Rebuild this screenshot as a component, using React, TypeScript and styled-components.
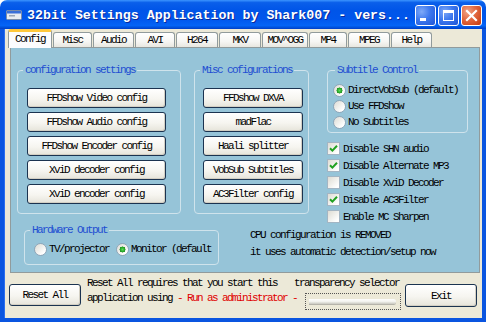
import React from 'react';
import styled, { createGlobalStyle, css } from 'styled-components';

const Global = createGlobalStyle`
  html, body { margin: 0; padding: 0; background: #fff; overflow: hidden; }
  #root { width: 486px; height: 322px; }
`;

const mono = `"Liberation Mono", "DejaVu Sans Mono", monospace`;
const fs = '11px';
const ls = '-1.6px';

const Window = styled.div`
  width: 486px;
  height: 322px;
  display: flex;
  flex-direction: column;
  font-family: ${mono};
  font-size: ${fs};
  letter-spacing: ${ls};
  color: #000;
`;

const TitleBar = styled.div`
  height: 29px;
  flex: none;
  display: flex;
  align-items: center;
  padding: 1px 4px 0 6px;
  box-sizing: border-box;
  border-radius: 7px 7px 0 0;
  background: linear-gradient(to bottom, #3C95FF 0%, #0A5FEA 9%, #0055E8 35%, #0056EC 65%, #0464F6 88%, #0050DA 95%, #003DC8 100%);
`;

const TitleIcon = styled.svg`
  flex: none;
  margin-right: 5px;
`;

const TitleText = styled.div`
  flex: 1;
  color: #fff;
  font-family: ${mono};
  font-weight: bold;
  font-size: 13.3px;
  letter-spacing: 0;
  white-space: nowrap;
  text-shadow: 1px 1px 0 #0A2A9A;
`;

const CaptionButtons = styled.div`
  display: flex;
  gap: 2px;
  margin-top: 1px;
`;

const CaptionButton = styled.div<{ $close?: boolean }>`
  width: 21px;
  height: 21px;
  box-sizing: border-box;
  border: 1px solid #fff;
  border-radius: 3px;
  display: flex;
  align-items: center;
  justify-content: center;
  background: ${(p) =>
    p.$close
      ? 'radial-gradient(circle at 30% 30%, #F0A487 0%, #E2683F 45%, #C4380C 100%)'
      : 'radial-gradient(circle at 30% 30%, #7FAAF8 0%, #3D78EE 45%, #1E55D6 100%)'};
`;

const Frame = styled.div`
  flex: 1;
  display: flex;
  flex-direction: column;
  border: 4px solid #0A55E0;
  border-top: 0;
  background: #ECE9D8;
  box-shadow: inset 1px 0 0 #2A6EF0;
`;

const TabStrip = styled.div`
  height: 18px;
  flex: none;
  display: flex;
  align-items: flex-end;
  padding-left: 6px;
  position: relative;
  z-index: 1;
`;

const Tab = styled.div<{ $w: number; $active?: boolean }>`
  box-sizing: border-box;
  width: ${(p) => p.$w}px;
  height: 15px;
  margin-right: 1px;
  border: 1px solid #919B9C;
  border-bottom: 0;
  border-radius: 3px 3px 0 0;
  background: linear-gradient(to bottom, #FFFFFF 0%, #F6F6F3 60%, #E8E7E0 100%);
  display: flex;
  align-items: center;
  justify-content: center;
  white-space: pre;
  ${(p) =>
    p.$active &&
    css`
      height: 19px;
      margin-left: -2px;
      margin-bottom: -1px;
      border-top: 3px solid #FFC83C;
      background: #FCFCFE;
      padding-bottom: 3px;
    `}
`;

const Panel = styled.div`
  height: 226px;
  flex: none;
  box-sizing: border-box;
  margin: 0 2px 0 6px;
  border: 1px solid #919B9C;
  background: #96C4D8;
  padding: 16px 0 0 6px;
  display: flex;
  flex-direction: column;
`;

const Row = styled.div<{ $mt?: number }>`
  display: flex;
  align-items: flex-start;
  margin-top: ${(p) => p.$mt ?? 0}px;
`;

const Group = styled.fieldset<{ $w: number; $ml?: number }>`
  box-sizing: border-box;
  width: ${(p) => p.$w}px;
  min-width: 0;
  margin: 0 0 0 ${(p) => p.$ml ?? 0}px;
  padding: 0;
  border: 1px solid #CFE3EC;
  border-radius: 4px;
`;

const Legend = styled.legend<{ $ml: number }>`
  padding: 0 2px;
  margin-left: ${(p) => p.$ml}px;
  line-height: 12px;
  color: #1E4ED2;
`;

const ButtonList = styled.div<{ $pad: string }>`
  display: flex;
  flex-direction: column;
  gap: 4px;
  padding: ${(p) => p.$pad};
`;

const XPButton = styled.button<{ $w?: number; $h?: number; $mt?: number }>`
  box-sizing: border-box;
  width: ${(p) => (p.$w ? `${p.$w}px` : '100%')};
  height: ${(p) => p.$h ?? 20}px;
  padding: 0;
  margin: ${(p) => p.$mt ?? 0}px 0 0 0;
  font-family: ${mono};
  font-size: ${fs};
  letter-spacing: ${ls};
  color: #000;
  border: 1px solid #1B3350;
  border-radius: 3px;
  background: linear-gradient(to bottom, #FFFFFF 0%, #F6F5F0 55%, #E6E4DA 100%);
  box-shadow: inset -1px -1px 0 #D3CFC3;
  white-space: pre;
`;

const RightColumn = styled.div`
  width: 141px;
  margin-left: 18px;
  display: flex;
  flex-direction: column;
`;

const OptionList = styled.div<{ $pad: string; $dir?: string }>`
  display: flex;
  flex-direction: ${(p) => p.$dir ?? 'column'};
  padding: ${(p) => p.$pad};
`;

const Option = styled.div<{ $ml?: number }>`
  height: 16px;
  display: flex;
  align-items: center;
  gap: 2px;
  margin-left: ${(p) => p.$ml ?? 0}px;
  white-space: pre;
`;

const Radio = styled.span<{ $checked?: boolean }>`
  flex: none;
  width: 13px;
  height: 13px;
  box-sizing: border-box;
  border-radius: 50%;
  border: 1px solid #8FA6B8;
  background: ${(p) =>
    p.$checked
      ? 'radial-gradient(circle at 50% 50%, #5FD85F 0, #27A727 2.2px, #1E8E1E 2.8px, rgba(255,255,255,0) 3.2px), linear-gradient(135deg, #DCDBD4 0%, #FFFFFF 80%)'
      : 'linear-gradient(135deg, #DCDBD4 0%, #FFFFFF 80%)'};
`;

const CheckList = styled.div`
  margin-top: 7px;
  display: flex;
  flex-direction: column;
`;

const CheckRow = styled.div`
  height: 17px;
  display: flex;
  align-items: center;
  gap: 3px;
  white-space: pre;
`;

const CheckBox = styled.span`
  flex: none;
  width: 13px;
  height: 13px;
  box-sizing: border-box;
  border: 1px solid #A3B5C3;
  background: linear-gradient(135deg, #DEDCD3 0%, #FFFFFF 85%);
  display: flex;
  align-items: center;
  justify-content: center;
`;

const InfoText = styled.div`
  margin-left: 31px;
  padding-top: 3px;
  line-height: 17px;
  white-space: pre;
`;

const Bottom = styled.div`
  flex: 1;
  display: flex;
  align-items: flex-start;
  padding: 0 5px;
`;

const Middle = styled.div`
  margin: 3px 0 0 6px;
  display: flex;
  flex-direction: column;
`;

const Line = styled.div`
  display: flex;
  align-items: flex-start;
  line-height: 15px;
  white-space: pre;
`;

const Red = styled.span`
  color: #E00000;
`;

const SliderLabel = styled.span`
  margin-left: 17px;
`;

const Slider = styled.div`
  width: 96px;
  height: 17px;
  box-sizing: border-box;
  margin: 2px 0 0 8px;
  border: 1px dotted #555;
  padding: 5px 4px 0 3px;
`;

const Track = styled.div`
  height: 5px;
  border-radius: 0 3px 3px 0;
  background: linear-gradient(to bottom, #FFFFFF 0%, #F2F2EE 50%, #C9C8C0 100%);
  box-shadow: 0 1px 0 #B5B3AA;
`;

const Spacer = styled.div`
  flex: 1;
`;

const Check = () => (
  <svg width="9" height="9" viewBox="0 0 9 9">
    <path d="M1 4.2 L3.4 6.6 L8 1.8" fill="none" stroke="#21A121" strokeWidth="2" />
  </svg>
);

const tabs: [string, number][] = [
  ['Config', 44],
  ['Misc', 39],
  ['Audio', 41],
  ['AVI', 40],
  ['H264', 42],
  ['MKV', 42],
  ['MOV^OGG', 46],
  ['MP4', 38],
  ['MPEG', 42],
  ['Help', 41],
];

const configButtons = [
  'FFDshow Video config',
  'FFDshow Audio config',
  'FFDshow Encoder config',
  'XviD decoder config',
  'XviD encoder config',
];

const miscButtons = ['FFDshow DXVA', 'madFlac', 'Haali splitter', 'VobSub Subtitles', 'AC3Filter config'];

const checks: [string, boolean][] = [
  ['Disable SHN audio', true],
  ['Disable Alternate MP3', true],
  ['Disable XviD Decoder', false],
  ['Disable AC3Filter', true],
  ['Enable MC Sharpen', false],
];

export default function App() {
  return (
    <>
      <Global />
      <Window>
        <TitleBar>
          <TitleIcon width="16" height="10" viewBox="0 0 16 10">
            <rect x="0.5" y="0.5" width="15" height="9" rx="1" fill="#E8ECF2" stroke="#7A8CA8" />
            <rect x="1" y="1" width="14" height="2.5" fill="#3A6FD8" />
            <rect x="3" y="5" width="6" height="1.5" fill="#9AA6B8" />
          </TitleIcon>
          <TitleText>32bit Settings Application by Shark007 - vers...</TitleText>
          <CaptionButtons>
            <CaptionButton>
              <svg width="19" height="19" viewBox="0 0 19 19">
                <rect x="4" y="12" width="6" height="3" fill="#fff" />
              </svg>
            </CaptionButton>
            <CaptionButton>
              <svg width="19" height="19" viewBox="0 0 19 19">
                <rect x="4.5" y="4.5" width="10" height="10" fill="none" stroke="#fff" />
                <rect x="4" y="4" width="11" height="3" fill="#fff" />
              </svg>
            </CaptionButton>
            <CaptionButton $close>
              <svg width="19" height="19" viewBox="0 0 19 19">
                <path d="M5 5 L14 14 M14 5 L5 14" stroke="#fff" strokeWidth="2.2" strokeLinecap="square" />
              </svg>
            </CaptionButton>
          </CaptionButtons>
        </TitleBar>
        <Frame>
          <TabStrip>
            {tabs.map(([label, w], i) => (
              <Tab key={label} $w={w} $active={i === 0}>
                {label}
              </Tab>
            ))}
          </TabStrip>
          <Panel>
            <Row>
              <Group $w={164}>
                <Legend $ml={5}>configuration settings</Legend>
                <ButtonList $pad="12px 14px 9px 9px">
                  {configButtons.map((b) => (
                    <XPButton key={b}>{b}</XPButton>
                  ))}
                </ButtonList>
              </Group>
              <Group $w={115} $ml={13}>
                <Legend $ml={5}>Misc cofigurations</Legend>
                <ButtonList $pad="12px 5px 9px 8px">
                  {miscButtons.map((b) => (
                    <XPButton key={b}>{b}</XPButton>
                  ))}
                </ButtonList>
              </Group>
              <RightColumn>
                <Group $w={141}>
                  <Legend $ml={7}>Subtitle Control</Legend>
                  <OptionList $pad="6px 0 2px 5px">
                    <Option>
                      <Radio $checked />
                      DirectVobSub (default)
                    </Option>
                    <Option>
                      <Radio />
                      Use FFDshow
                    </Option>
                    <Option>
                      <Radio />
                      No Subtitles
                    </Option>
                  </OptionList>
                </Group>
                <CheckList>
                  {checks.map(([label, on]) => (
                    <CheckRow key={label}>
                      <CheckBox>{on && <Check />}</CheckBox>
                      {label}
                    </CheckRow>
                  ))}
                </CheckList>
              </RightColumn>
            </Row>
            <Row $mt={-1}>
              <Group $w={195} $ml={7}>
                <Legend $ml={5}>Hardware Output</Legend>
                <OptionList $pad="5px 0 7px 9px" $dir="row">
                  <Option>
                    <Radio />
                    TV/projector
                  </Option>
                  <Option $ml={7}>
                    <Radio $checked />
                    Monitor (default
                  </Option>
                </OptionList>
              </Group>
              <InfoText>
                CPU configuration is REMOVED{'\n'}it uses automatic detection/setup now
              </InfoText>
            </Row>
          </Panel>
          <Bottom>
            <XPButton $w={72} $h={22} $mt={11}>
              Reset All
            </XPButton>
            <Middle>
              <Line>
                Reset All requires that you start this
                <SliderLabel>transparency selector</SliderLabel>
              </Line>
              <Line>
                application using <Red>- Run as administrator -</Red>
                <Slider>
                  <Track />
                </Slider>
              </Line>
            </Middle>
            <Spacer />
            <XPButton $w={72} $h={23} $mt={11}>
              Exit
            </XPButton>
          </Bottom>
        </Frame>
      </Window>
    </>
  );
}
